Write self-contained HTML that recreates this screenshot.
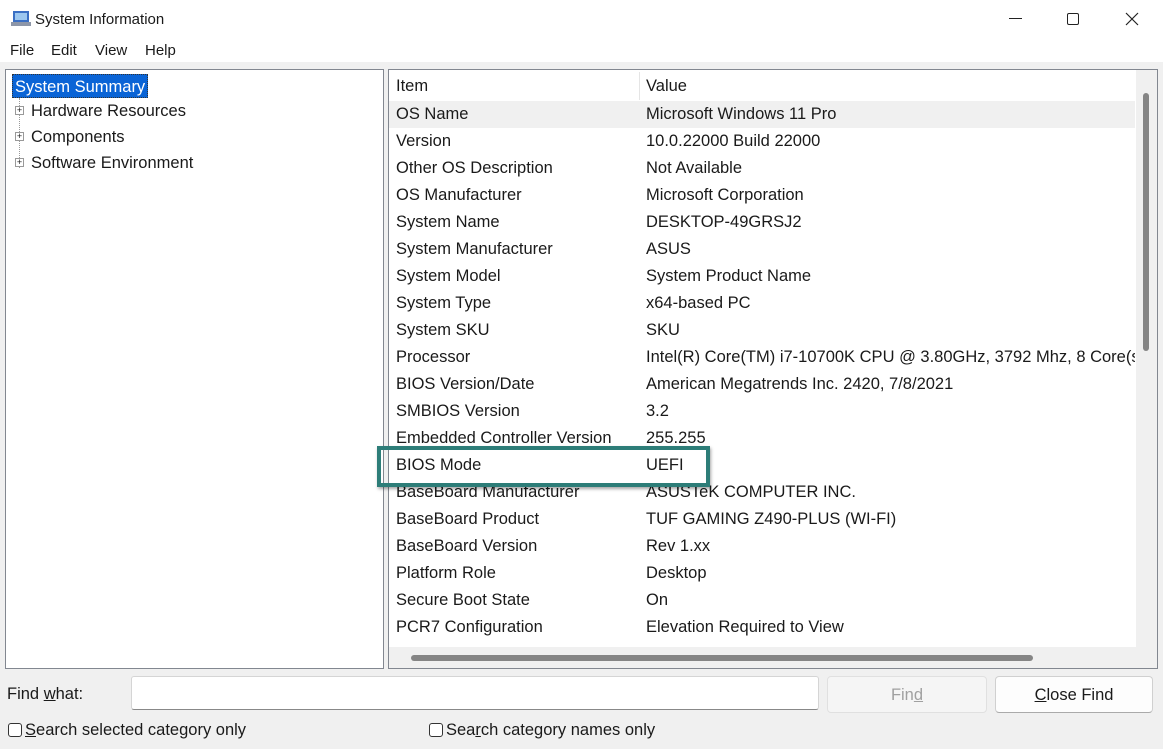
<!DOCTYPE html>
<html><head><meta charset="utf-8"><style>
*{margin:0;padding:0;box-sizing:border-box}
body{width:1163px;height:749px;background:#f0f0f0;font-family:"Liberation Sans",sans-serif;font-size:16.5px;color:#1a1a1a;position:relative;overflow:hidden}
.abs{position:absolute}
.title{left:0;top:0;width:1163px;height:62px;background:#fff}
.pane{background:#fff;border:1px solid #828790}
.row{position:absolute;left:0;width:746px;height:27px;line-height:27px}
.row span{position:absolute}
.row .a{left:7px}.row .b{left:257px;white-space:nowrap}
u{text-decoration:underline}
.chk{display:inline-block;width:14px;height:14px;border:1px solid #333;border-radius:3px;background:#fff;vertical-align:-2px;margin-right:3px}
</style></head><body>
<div class="abs title"></div>
<svg class="abs" style="left:11px;top:10px" width="20" height="18"><rect x="2" y="1" width="16" height="11" fill="#3a6fc4"/><rect x="4" y="3" width="12" height="7" fill="#9cc7f0"/><rect x="0" y="12" width="20" height="4" fill="#8d96a8"/></svg>
<div class="abs" style="left:35px;top:11px;font-size:15px">System Information</div>
<div class="abs" style="left:1009px;top:18px;width:13px;height:1px;background:#222"></div>
<div class="abs" style="left:1067px;top:13px;width:12px;height:12px;border:1px solid #222;border-radius:2px"></div>
<svg class="abs" style="left:1125px;top:12px" width="14" height="14"><path d="M1 1L13 13M13 1L1 13" stroke="#222" stroke-width="1.2"/></svg>
<div class="abs" style="left:10px;top:42px;font-size:15px"><span class="abs" style="left:0">File</span><span class="abs" style="left:41px">Edit</span><span class="abs" style="left:85px">View</span><span class="abs" style="left:135px">Help</span></div>

<div class="abs pane" style="left:5px;top:69px;width:379px;height:600px">
<div class="abs" style="left:6px;top:4px;height:24px;line-height:24px;padding:0 2px;background:#0a64d6;color:#fff;border:1px dotted #333">System Summary</div>
<div class="abs" style="left:13px;top:28px;width:1px;height:70px;border-left:1px dotted #999"></div>
<div class="abs" style="left:25px;top:30px;line-height:22px">Hardware Resources<br><span style="display:block;margin-top:4px">Components</span><span style="display:block;margin-top:4px">Software Environment</span></div>
<div class="abs" style="left:9px;top:36px;width:9px;height:9px;border:1px solid #999;background:#fff;font-size:9px;line-height:7px;text-align:center">+</div>
<div class="abs" style="left:9px;top:62px;width:9px;height:9px;border:1px solid #999;background:#fff;font-size:9px;line-height:7px;text-align:center">+</div>
<div class="abs" style="left:9px;top:88px;width:9px;height:9px;border:1px solid #999;background:#fff;font-size:9px;line-height:7px;text-align:center">+</div>
</div>

<div class="abs pane" style="left:388px;top:69px;width:770px;height:600px;overflow:hidden">
<div class="row" style="top:3px"><span class="a">Item</span><span class="b">Value</span></div>
<div class="abs" style="left:250px;top:2px;width:1px;height:28px;background:#e5e5e5"></div>
<div class="row" style="top:31px;background:#f0f0f0"><span class="a">OS Name</span><span class="b">Microsoft Windows 11 Pro</span></div>
<div class="row" style="top:58px"><span class="a">Version</span><span class="b">10.0.22000 Build 22000</span></div>
<div class="row" style="top:85px"><span class="a">Other OS Description</span><span class="b">Not Available</span></div>
<div class="row" style="top:112px"><span class="a">OS Manufacturer</span><span class="b">Microsoft Corporation</span></div>
<div class="row" style="top:139px"><span class="a">System Name</span><span class="b">DESKTOP-49GRSJ2</span></div>
<div class="row" style="top:166px"><span class="a">System Manufacturer</span><span class="b">ASUS</span></div>
<div class="row" style="top:193px"><span class="a">System Model</span><span class="b">System Product Name</span></div>
<div class="row" style="top:220px"><span class="a">System Type</span><span class="b">x64-based PC</span></div>
<div class="row" style="top:247px"><span class="a">System SKU</span><span class="b">SKU</span></div>
<div class="row" style="top:274px;overflow:hidden"><span class="a">Processor</span><span class="b">Intel(R) Core(TM) i7-10700K CPU @ 3.80GHz, 3792 Mhz, 8 Core(s)</span></div>
<div class="row" style="top:301px"><span class="a">BIOS Version/Date</span><span class="b">American Megatrends Inc. 2420, 7/8/2021</span></div>
<div class="row" style="top:328px"><span class="a">SMBIOS Version</span><span class="b">3.2</span></div>
<div class="row" style="top:355px"><span class="a">Embedded Controller Version</span><span class="b">255.255</span></div>
<div class="row" style="top:382px"><span class="a">BIOS Mode</span><span class="b">UEFI</span></div>
<div class="row" style="top:409px"><span class="a">BaseBoard Manufacturer</span><span class="b">ASUSTeK COMPUTER INC.</span></div>
<div class="row" style="top:436px"><span class="a">BaseBoard Product</span><span class="b">TUF GAMING Z490-PLUS (WI-FI)</span></div>
<div class="row" style="top:463px"><span class="a">BaseBoard Version</span><span class="b">Rev 1.xx</span></div>
<div class="row" style="top:490px"><span class="a">Platform Role</span><span class="b">Desktop</span></div>
<div class="row" style="top:517px"><span class="a">Secure Boot State</span><span class="b">On</span></div>
<div class="row" style="top:544px"><span class="a">PCR7 Configuration</span><span class="b">Elevation Required to View</span></div>
<div class="abs" style="left:747px;top:0;width:22px;height:600px;background:#f0f0f0"></div>
<div class="abs" style="left:754px;top:23px;width:6px;height:258px;background:#858585;border-radius:3px"></div>
<div class="abs" style="left:0;top:577px;width:770px;height:23px;background:#f0f0f0"></div>
<div class="abs" style="left:22px;top:585px;width:622px;height:6px;background:#858585;border-radius:3px"></div>
</div>

<div class="abs" style="left:377px;top:446px;width:333px;height:41px;border:4px solid #2d7d78;box-shadow:1px 2px 3px rgba(0,0,0,.35)"></div>

<div class="abs" style="left:7px;top:685px">Find <u>w</u>hat:</div>
<div class="abs" style="left:131px;top:676px;width:688px;height:34px;background:#fff;border:1px solid #d5d5d5;border-bottom-color:#888;border-radius:3px"></div>
<div class="abs" style="left:827px;top:676px;width:160px;height:37px;background:#f5f5f5;border:1px solid #e0e0e0;border-radius:4px;color:#a0a0a0;text-align:center;line-height:37px">Fin<u>d</u></div>
<div class="abs" style="left:995px;top:676px;width:158px;height:37px;background:#fdfdfd;border:1px solid #d0d0d0;border-bottom-color:#aaa;border-radius:4px;text-align:center;line-height:37px"><u>C</u>lose Find</div>
<div class="abs" style="left:8px;top:721px"><span class="chk"></span><u>S</u>earch selected category only</div>
<div class="abs" style="left:429px;top:721px"><span class="chk"></span>Sea<u>r</u>ch category names only</div>
</body></html>
